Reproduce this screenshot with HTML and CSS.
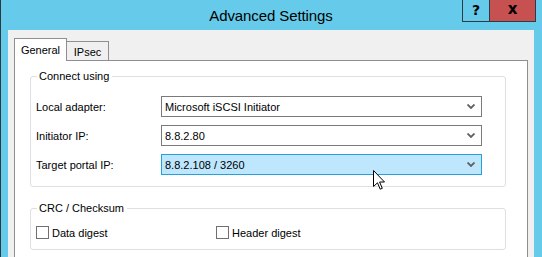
FILE: index.html
```html
<!DOCTYPE html>
<html>
<head>
<meta charset="utf-8">
<link rel="stylesheet" href="styles.css">
</head>
<body>
<div class="window">
  <div class="titlebar">
    <div class="spacer"></div>
    <div class="title">Advanced Settings</div>
    <div class="caption-buttons">
      <div class="cbtn help">?</div>
      <div class="cbtn close">x</div>
    </div>
  </div>
  <div class="client">
    <div class="tabs">
      <div class="tab active">General</div>
      <div class="tab">IPsec</div>
    </div>
    <div class="panel">
      <fieldset class="group connect">
        <legend>Connect using</legend>
        <div class="rows">
          <div class="label">Local adapter:</div>
          <div class="combo"><span>Microsoft iSCSI Initiator</span><svg class="chev" width="8" height="5" viewBox="0 0 8 5"><path d="M0.5 0.5 L4 4 L7.5 0.5" fill="none" stroke="#606060" stroke-width="1.8"/></svg></div>
          <div class="label">Initiator IP:</div>
          <div class="combo"><span>8.8.2.80</span><svg class="chev" width="8" height="5" viewBox="0 0 8 5"><path d="M0.5 0.5 L4 4 L7.5 0.5" fill="none" stroke="#606060" stroke-width="1.8"/></svg></div>
          <div class="label">Target portal IP:</div>
          <div class="combo hot"><span>8.8.2.108 / 3260</span><svg class="chev" width="8" height="5" viewBox="0 0 8 5"><path d="M0.5 0.5 L4 4 L7.5 0.5" fill="none" stroke="#606060" stroke-width="1.8"/></svg></div>
        </div>
      </fieldset>
      <fieldset class="group crc">
        <legend>CRC / Checksum</legend>
        <div class="checks">
          <div class="check"><span class="box"></span>Data digest</div>
          <div class="check"><span class="box"></span>Header digest</div>
        </div>
      </fieldset>
    </div>
  </div>
  <svg class="cursor" width="13" height="21" viewBox="0 0 13 21"><path d="M0.5 0.5 L0.5 16.5 L4.5 12.8 L7.2 19.2 L9.3 18.3 L6.6 12 L11.5 12 Z" fill="#fff" stroke="#000" stroke-width="1" stroke-linejoin="miter"/></svg>
</div>
</body>
</html>
```
FILE: styles.css
```css
html, body {
  margin: 0;
  padding: 0;
}
body {
  width: 542px;
  height: 257px;
  overflow: hidden;
  background: #66cbea;
  font-family: "Liberation Sans", Arial, sans-serif;
  font-size: 11px;
  color: #000;
}
.window {
  position: relative;
  height: 257px;
  border-left: 1px solid #2b3a44;
  background: #66cbea;
}
.titlebar {
  height: 30px;
  display: grid;
  grid-template-columns: 1fr auto 1fr;
}
.title {
  font-size: 15px;
  letter-spacing: -0.1px;
  line-height: 17px;
  padding-top: 7px;
  padding-right: 1px;
  color: #000;
}
.caption-buttons {
  justify-self: end;
  align-self: start;
  display: flex;
  margin-right: 6px;
  border: 1px solid #2d3b45;
  border-top: 0;
  height: 21px;
}
.cbtn {
  height: 21px;
  display: flex;
  align-items: center;
  justify-content: center;
  font-weight: bold;
  font-family: "DejaVu Sans", sans-serif;
  color: #000;
}
.help {
  width: 27px;
  border-right: 1px solid #2d3b45;
  background: #66cbea;
  font-size: 14px;
  padding-bottom: 1px;
  box-sizing: border-box;
}
.close {
  width: 45px;
  background: #c75050;
  font-size: 15px;
  padding-bottom: 3px;
  box-sizing: border-box;
}
.client {
  margin: 0 8px 0 7px;
  height: 227px;
  background: #f0f0f0;
  padding: 8px 6px 0;
  box-sizing: border-box;
}
.tabs {
  display: flex;
  align-items: flex-end;
}
.tab {
  border: 1px solid #8e8f92;
  border-bottom: 0;
  box-sizing: border-box;
  text-align: center;
}
.tab.active {
  position: relative;
  z-index: 1;
  width: 53px;
  height: 23px;
  margin-bottom: -1px;
  background: #fff;
  line-height: 15px;
  padding-top: 4px;
}
.tab:not(.active) {
  width: 42px;
  height: 19px;
  border-left: 0;
  background: #f0f0f0;
  line-height: 15px;
  padding-top: 3px;
}
.panel {
  height: 200px;
  background: #fff;
  border: 1px solid #8e8f92;
  border-bottom: 0;
  padding: 8px 21px 0 15px;
}
.group {
  margin: 0;
  border: 1px solid #dcdfe3;
  border-radius: 3px;
  padding: 0 23px 0 5px;
}
.group legend {
  margin-left: 1px;
  padding: 0 3px 0 2px;
  line-height: 14px;
  height: 14px;
}
.connect {
  padding-top: 13px;
  padding-bottom: 11px;
}
.rows {
  display: grid;
  grid-template-columns: 125px 1fr;
  row-gap: 8px;
  align-items: center;
}
.combo {
  height: 21px;
  box-sizing: border-box;
  border: 1px solid #7a7a7a;
  background: #fff;
  display: flex;
  align-items: center;
  justify-content: space-between;
  padding: 0 6px 0 3px;
}
.combo.hot {
  background: #bee6fd;
  border-color: #26a0da;
}
.chev {
  display: block;
}
.crc {
  margin-top: 14px;
  padding-top: 11px;
  padding-bottom: 10px;
}
.checks {
  display: grid;
  grid-template-columns: 180px auto;
}
.check {
  display: flex;
  align-items: center;
  gap: 3px;
  height: 13px;
}
.box {
  width: 13px;
  height: 13px;
  box-sizing: border-box;
  border: 1px solid #707070;
  background: #fff;
}
.cursor {
  position: absolute;
  left: 372px;
  top: 170px;
}
```
